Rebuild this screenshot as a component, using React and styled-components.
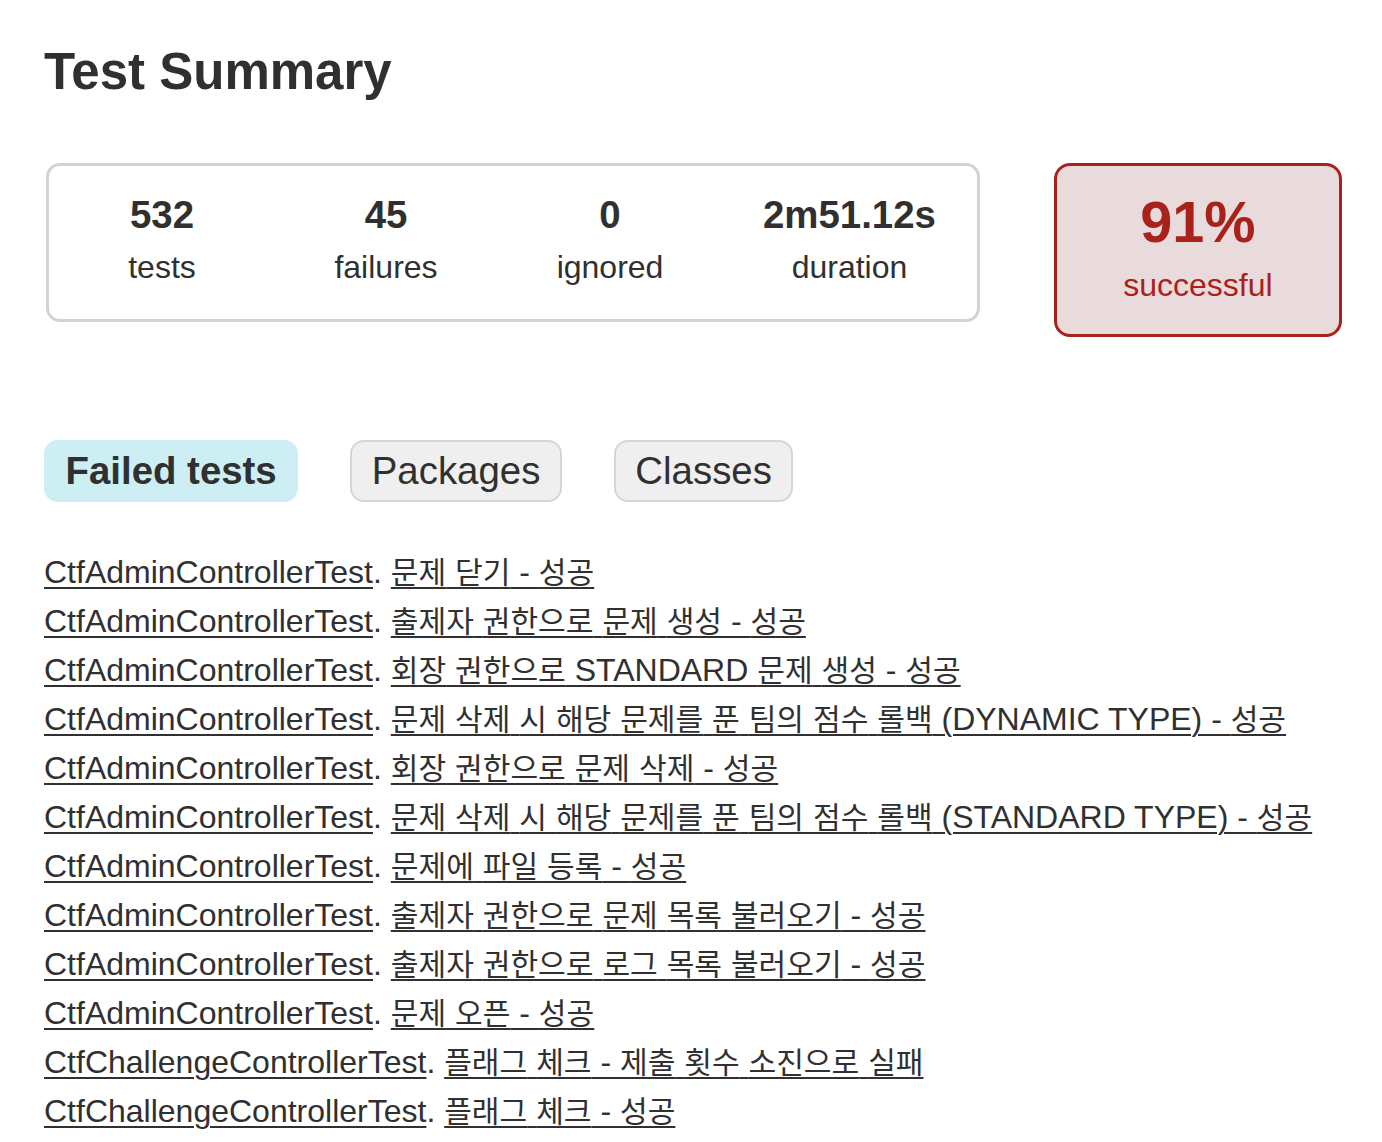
import React from 'react';
import styled, { createGlobalStyle } from 'styled-components';

const GlobalStyle = createGlobalStyle`
  html, body { margin: 0; padding: 0; background: #ffffff; }
  body {
    font-family: "Liberation Sans", Arial, "Noto Sans CJK KR", sans-serif;
    color: #303030;
  }
`;

const Page = styled.div`
  padding: 43px 44px 0;
`;

const Title = styled.h1`
  margin: 0;
  font-size: 51px;
  line-height: 58px;
  font-weight: 700;
  color: #303030;
`;

const SummaryRow = styled.div`
  display: flex;
  align-items: flex-start;
  margin-top: 62px;
`;

const SummaryGroup = styled.div`
  flex-shrink: 0;
  display: flex;
  gap: 82px;
  margin-left: 2px;
  padding: 27px 41px 33px 42px;
  border: 3px solid #d3d3d3;
  border-radius: 14px;
`;

const InfoBox = styled.div`
  min-width: 142px;
  text-align: center;
`;

const Counter = styled.div`
  font-size: 38.4px;
  font-weight: 700;
  line-height: 44px;
  margin-bottom: 12px;
`;

const Label = styled.div`
  font-size: 32px;
  line-height: 37px;
`;

const SuccessRate = styled.div`
  flex-shrink: 0;
  margin-left: 74px;
  width: 282px;
  padding: 23px 0 30px;
  text-align: center;
  border: 3px solid #a8221b;
  border-radius: 16px;
  background: #e9dbdb;
  color: #a8221b;
`;

const Percent = styled.div`
  font-size: 57.6px;
  font-weight: 700;
  line-height: 66px;
  margin-bottom: 12px;
`;

const TabList = styled.ul`
  display: flex;
  gap: 52px;
  list-style: none;
  margin: 103px 0 0;
  padding: 0;
`;

const Tab = styled.li`
  padding: 7px 19.5px;
  border: 2px solid ${(p) => (p.$selected ? '#cdeef3' : '#d6d6d6')};
  background: ${(p) => (p.$selected ? '#cdeef3' : '#efefef')};
  border-radius: 14px;
  font-size: 38.4px;
  line-height: 44px;
  font-weight: ${(p) => (p.$selected ? 700 : 400)};
  color: #303030;
`;

const LinkList = styled.ul`
  list-style: none;
  margin: 52px 0 0;
  padding: 0;
`;

const LinkItem = styled.li`
  font-size: 32px;
  line-height: 37px;
  margin-bottom: 12px;
  white-space: nowrap;
`;

const TestLink = styled.a`
  color: #303030;
  text-decoration: underline;
  text-decoration-thickness: 2px;
  text-underline-offset: 4px;
  cursor: pointer;
`;

const Hangul = styled.span`
  font-family: "Noto Sans CJK KR", sans-serif;
  font-size: 30.1px;
  line-height: 1;
`;

const HANGUL_RE = /([\u1100-\u11FF\u3130-\u318F\uAC00-\uD7AF]+)/;

function MixedText({ text }) {
  return text
    .split(HANGUL_RE)
    .filter((s) => s.length > 0)
    .map((part, i) =>
      HANGUL_RE.test(part) ? <Hangul key={i}>{part}</Hangul> : <React.Fragment key={i}>{part}</React.Fragment>
    );
}

const counters = [
  { value: '532', label: 'tests' },
  { value: '45', label: 'failures' },
  { value: '0', label: 'ignored' },
  { value: '2m51.12s', label: 'duration' },
];

const tabs = [
  { name: 'Failed tests', selected: true },
  { name: 'Packages' },
  { name: 'Classes' },
];

const A = 'CtfAdminControllerTest';
const C = 'CtfChallengeControllerTest';

const failed = [
  [A, '문제 닫기 - 성공'],
  [A, '출제자 권한으로 문제 생성 - 성공'],
  [A, '회장 권한으로 STANDARD 문제 생성 - 성공'],
  [A, '문제 삭제 시 해당 문제를 푼 팀의 점수 롤백 (DYNAMIC TYPE) - 성공'],
  [A, '회장 권한으로 문제 삭제 - 성공'],
  [A, '문제 삭제 시 해당 문제를 푼 팀의 점수 롤백 (STANDARD TYPE) - 성공'],
  [A, '문제에 파일 등록 - 성공'],
  [A, '출제자 권한으로 문제 목록 불러오기 - 성공'],
  [A, '출제자 권한으로 로그 목록 불러오기 - 성공'],
  [A, '문제 오픈 - 성공'],
  [C, '플래그 체크 - 제출 횟수 소진으로 실패'],
  [C, '플래그 체크 - 성공'],
];

export default function App() {
  return (
    <>
      <GlobalStyle />
      <Page>
        <Title>Test Summary</Title>
        <SummaryRow>
          <SummaryGroup>
            {counters.map((c) => (
              <InfoBox key={c.label}>
                <Counter>{c.value}</Counter>
                <Label>{c.label}</Label>
              </InfoBox>
            ))}
          </SummaryGroup>
          <SuccessRate>
            <Percent>91%</Percent>
            <Label>successful</Label>
          </SuccessRate>
        </SummaryRow>
        <TabList>
          {tabs.map((t) => (
            <Tab key={t.name} $selected={t.selected}>
              {t.name}
            </Tab>
          ))}
        </TabList>
        <LinkList>
          {failed.map(([cls, name], i) => (
            <LinkItem key={i}>
              <TestLink>{cls}</TestLink>.{' '}
              <TestLink>
                <MixedText text={name} />
              </TestLink>
            </LinkItem>
          ))}
        </LinkList>
      </Page>
    </>
  );
}
